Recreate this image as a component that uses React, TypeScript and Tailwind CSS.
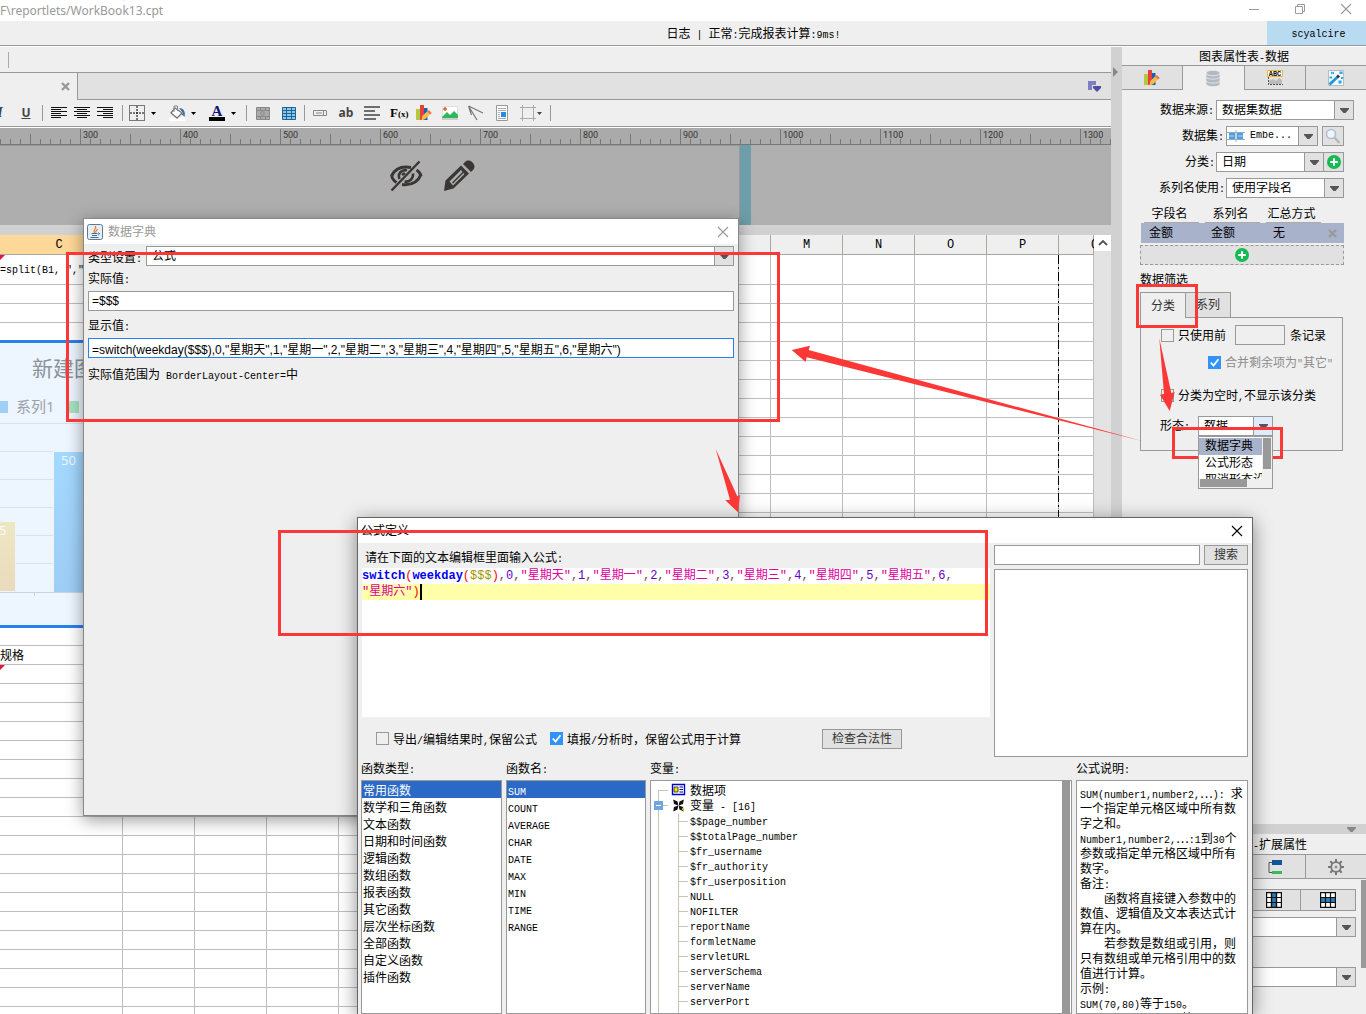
import { Fragment, type ReactNode } from "react"
import clsx from "clsx"

const cjkFont = "font-['Liberation_Sans','Noto_Sans_CJK_SC',sans-serif]"

const rulerMarks = Array.from({ length: 112 }, (_, i) => 220 + i * 10)
const columnNames = ["C", "D", "E", "F", "G", "H", "I", "J", "K", "L", "M", "N", "O", "P", "Q"]
const sheetRows = Array.from({ length: 40 }, (_, i) => i)

const functionTypes = [
  "常用函数",
  "数学和三角函数",
  "文本函数",
  "日期和时间函数",
  "逻辑函数",
  "数组函数",
  "报表函数",
  "其它函数",
  "层次坐标函数",
  "全部函数",
  "自定义函数",
  "插件函数",
]

const functionNames = ["SUM", "COUNT", "AVERAGE", "CHAR", "DATE", "MAX", "MIN", "TIME", "RANGE"]

const variables = [
  "$$page_number",
  "$$totalPage_number",
  "$fr_username",
  "$fr_authority",
  "$fr_userposition",
  "NULL",
  "NOFILTER",
  "reportName",
  "formletName",
  "servletURL",
  "serverSchema",
  "serverName",
  "serverPort",
  "serverURL",
]

const description = [
  "SUM(number1,number2,…): 求",
  "一个指定单元格区域中所有数",
  "字之和。",
  "Number1,number2,…:1到30个",
  "参数或指定单元格区域中所有",
  "数字。",
  "备注:",
  "    函数将直接键入参数中的",
  "数值、逻辑值及文本表达式计",
  "算在内。",
  "    若参数是数组或引用，则",
  "只有数组或单元格引用中的数",
  "值进行计算。",
  "示例:",
  "SUM(70,80)等于150。",
  'SUM("70",80,TRUE)等于',
]

const weekdays = ["星期天", "星期一", "星期二", "星期三", "星期四", "星期五"]

// Latin runs are set in a half-width mono face, Chinese runs in the CJK face.
function Txt({ children, className }: { children: string; className?: string }) {
  const runs = children.match(/[\x20-\x7e]+|[^\x20-\x7e]+/g) ?? []
  return (
    <span className={clsx("font-['Noto_Sans_CJK_SC',sans-serif] text-[12px] whitespace-pre", className)}>
      {runs.map((run, i) =>
        run.charCodeAt(0) < 127 ? (
          <span key={i} className="font-['Liberation_Mono',monospace] text-[10px]">
            {run}
          </span>
        ) : (
          <Fragment key={i}>{run}</Fragment>
        )
      )}
    </span>
  )
}

function Caret() {
  return (
    <svg viewBox="0 0 9 5" className="h-[5px] w-[9px] shrink-0" fill="currentColor">
      <path d="M0 0h9v1L5.500 5h-2L0 1z" />
    </svg>
  )
}

type ComboProps = {
  id: string
  value: string
  label?: string
  className?: string
  hot?: boolean
  icon?: ReactNode
}

function Combo({ id, value, label, className, hot, icon }: ComboProps) {
  return (
    <div className={clsx("relative flex h-5 items-stretch border border-[#999] bg-white", className)}>
      {icon}
      <select
        id={id}
        aria-label={label}
        className="min-w-0 flex-1 appearance-none bg-transparent pl-[5px] pr-5 text-[12px] leading-none text-black outline-none"
      >
        <option>{value}</option>
      </select>
      <span
        className={clsx(
          "pointer-events-none absolute inset-y-0 right-0 flex w-[19px] items-center justify-center border-l border-[#999] text-[#555]",
          hot ? "bg-[#ddebfc]" : "bg-[#e1e1e1]"
        )}
      >
        <Caret />
      </span>
    </div>
  )
}

function Check({ id, text, checked, muted }: { id: string; text: string; checked?: boolean; muted?: boolean }) {
  return (
    <div className="flex items-center gap-1">
      <span className="relative size-[13px] shrink-0">
        <input
          id={id}
          type="checkbox"
          defaultChecked={checked}
          className="peer block size-[13px] appearance-none border border-[#999] checked:border-[#3093f5] checked:bg-[#3093f5]"
        />
        <svg
          viewBox="0 0 13 13"
          className="pointer-events-none absolute inset-0 hidden size-[13px] peer-checked:block"
          fill="none"
          stroke="#fff"
          strokeWidth="1.8"
        >
          <path d="M2.800 6.500l2.700 3L10.500 3.200" />
        </svg>
      </span>
      <label htmlFor={id} className={clsx("h-4 leading-4", muted && "text-[#8c8c8c]")}>
        <Txt>{text}</Txt>
      </label>
    </div>
  )
}

function PlusDot() {
  return (
    <svg viewBox="0 0 14 14" className="size-[14px]">
      <circle cx="7" cy="7" r="7" fill="#13bb50" />
      <path d="M7 3.200v7.600M3.200 7h7.600" stroke="#fff" strokeWidth="2" />
    </svg>
  )
}

function CloseIcon({ className }: { className?: string }) {
  return (
    <svg viewBox="0 0 12 12" className={clsx("size-3", className)} fill="none" stroke="currentColor" strokeWidth="1.1">
      <path d="M1 1l10 10M11 1L1 11" />
    </svg>
  )
}

function SmallCross() {
  return (
    <svg viewBox="0 0 9 9" className="size-[9px]" stroke="#999" strokeWidth="2.400">
      <path d="M1 1l7 7M8 1L1 8" />
    </svg>
  )
}

function ChartIcon() {
  return (
    <svg viewBox="0 0 16 16" className="size-4">
      <path d="M0 4h4v11H0z" fill="#b4ca3c" />
      <path d="M4 0h4v15H4z" fill="#ea3f3d" />
      <path d="M8 3h3.500v12H8z" fill="#1166ac" />
      <path d="M5.500 15.500l.8-4.500 4.700-4.500 3 3-4.700 4.500z" fill="#f6bc4e" />
      <path d="M11 6.500l1.800-1.500 3 3L14 9.500z" fill="#f2744a" />
    </svg>
  )
}

function ToolButton({ label, menu, children }: { label: string; menu?: boolean; children: ReactNode }) {
  return (
    <button type="button" aria-label={label} className="flex shrink-0 items-center gap-[6px]">
      <svg viewBox="0 0 16 16" className="size-4 shrink-0 overflow-visible" fill="none">
        {children}
      </svg>
      {menu && (
        <svg viewBox="0 0 5 3" className="h-[3px] w-[5px]">
          <path d="M0 0h5L2.500 3z" fill="#000" />
        </svg>
      )}
    </button>
  )
}

function AlignLines({ kind }: { kind: "left" | "center" | "right" }) {
  const rows = [16, 10, 16, 10, 16, 10]
  return (
    <>
      {rows.map((w, i) => {
        const x = kind === "left" ? 0 : kind === "center" ? (16 - w) / 2 : 16 - w
        return <rect key={i} x={x} y={2 + i * 2} width={w} height="1" fill="#111" />
      })}
    </>
  )
}

function Toolbar() {
  const group = "flex h-4 items-center border-r border-[#999]"
  return (
    <div className="flex h-[27px] shrink-0 items-center border-b border-[#999] bg-[#efefef]">
      <div className={clsx(group, "w-[43px] justify-end gap-[10px] overflow-hidden pr-2")}>
        <button type="button" className="w-4 shrink-0 font-['Liberation_Serif',serif] text-[14px] leading-4 font-bold text-[#444] italic">
          I
        </button>
        <button type="button" className="w-4 shrink-0 font-['Open_Sans',sans-serif] text-[12px] leading-4 font-bold text-[#444] underline">
          U
        </button>
      </div>
      <div className={clsx(group, "gap-[7px] pr-[9px] pl-2")}>
        <ToolButton label="左对齐"><AlignLines kind="left" /></ToolButton>
        <ToolButton label="居中"><AlignLines kind="center" /></ToolButton>
        <ToolButton label="右对齐"><AlignLines kind="right" /></ToolButton>
      </div>
      <div className={clsx(group, "gap-[13px] pr-[10px] pl-[6px]")}>
        <ToolButton label="边框" menu>
          <path d="M.5.500h15v15H.5z" stroke="#000" strokeDasharray="1 1" />
          <path d="M8 1v14M1 8h14" stroke="#000" strokeDasharray="2 1" />
        </ToolButton>
        <ToolButton label="填充" menu>
          <path d="M0 12.500h16v3.500H0z" fill="#fff" />
          <path d="M6 3l7 5-5 5-6-5z" fill="#fff" stroke="#777" strokeWidth="1.300" />
          <path d="M5 7V1h3.500v5" stroke="#888" />
          <path d="M10 3c4 0 7 3 5.500 9-.5-1-2-2-3-2.500L14 8z" fill="#3a6f9e" />
        </ToolButton>
        <ToolButton label="字体颜色" menu>
          <text x="8" y="11" textAnchor="middle" fontFamily="Liberation Serif" fontWeight="700" fontSize="15" fill="#12127c">
            A
          </text>
          <path d="M0 12h16v4H0z" fill="#000" />
        </ToolButton>
      </div>
      <div className={clsx(group, "gap-[10px] pr-[7px] pl-2")}>
        <ToolButton label="合并单元格">
          <path d="M1.500 2.500h13v12h-13z" fill="#aaa" stroke="#888" />
          <path d="M1 5.500h14M1 11.500h14M5.500 2v3M10.500 2v3M5.500 12v3M10.500 12v3" stroke="#888" />
          <circle cx="7.500" cy="8.500" r="1.800" stroke="#8a8a8a" />
        </ToolButton>
        <ToolButton label="拆分单元格">
          <path d="M1.500 2.500h13v12h-13z" fill="#7dcdf2" stroke="#2d5f8e" />
          <path d="M1 5.500h14M1 8.500h14M1 11.500h14M5.500 2v13M10.500 2v13" stroke="#2d5f8e" />
        </ToolButton>
      </div>
      <div className={clsx(group, "gap-[10px] pr-2 pl-[7px]")}>
        <ToolButton label="控件">
          <path d="M1.500 5.500h13v5h-13zM4 8h6" stroke="#888" />
          <path d="M11.500 6v4" stroke="#888" />
        </ToolButton>
        <button type="button" className="w-4 shrink-0 font-['Open_Sans',sans-serif] text-[12px] leading-4 font-bold text-[#444]">
          ab
        </button>
        <ToolButton label="段落">
          <path d="M0 2h16M0 6h11M0 10h16M0 14h12" stroke="#444" strokeWidth="1.600" />
        </ToolButton>
        <button type="button" className="w-4 shrink-0 font-['Liberation_Serif',serif] text-[13px] leading-4 font-bold text-black">
          F<span className="text-[9px]">(x)</span>
        </button>
        <button type="button" aria-label="图表"><ChartIcon /></button>
        <ToolButton label="图片">
          <path d="M.5 1.500h15v13H.5z" fill="#fff" stroke="#ddd" />
          <path d="M0 12l5-5 3 3 4-4 4 4v3H0z" fill="#2db85a" />
          <path d="M0 13h16v2H0z" fill="#ccc" />
          <path d="M3 2v4M1 4h4" stroke="#f05a28" strokeWidth="1.500" />
        </ToolButton>
        <ToolButton label="斜线">
          <path d="M.5 1L15 8M.5 1L9 15M.5 1l3 9" stroke="#777" strokeWidth="1.200" />
        </ToolButton>
        <ToolButton label="文档">
          <path d="M2.500.500h11v15h-11z" fill="#fff" stroke="#999" />
          <path d="M4 3.500h8M4 5.500h8M4 7.500h2M4 9.500h2M4 11.500h2M4 13.500h8" stroke="#aaa" />
          <path d="M7 7h5v5H7z" fill="#268de0" />
        </ToolButton>
        <button type="button" aria-label="悬浮元素" className="flex items-center gap-px">
          <svg viewBox="0 0 16 16" className="size-4" fill="none" stroke="#aaa">
            <path d="M2.500 0v16M13.500 0v16M0 2.500h16M0 13.500h16" />
          </svg>
          <svg viewBox="0 0 5 3" className="h-[3px] w-[5px]">
            <path d="M0 0h5L2.500 3z" fill="#444" />
          </svg>
        </button>
      </div>
    </div>
  )
}

function Ruler() {
  return (
    <svg className="block h-[18px] w-full shrink-0 border-t border-white bg-[#aaa]">
      <path d="M0 16.500h2000" stroke="#777" />
      {rulerMarks.map((v) => {
        const x = v - 220
        const len = v % 100 === 0 ? 15 : v % 50 === 0 ? 10 : 5
        return <path key={v} d={`M${x + 0.5} ${16 - len}V16`} stroke="#777" />
      })}
      {rulerMarks
        .filter((v) => v % 100 === 0)
        .map((v) => (
          <text key={v} x={v - 217} y="10" fontFamily="Roboto" fontSize="9" fill="#333">
            {v}
          </text>
        ))}
    </svg>
  )
}

function ParameterPane() {
  return (
    <div className="flex h-20 shrink-0 bg-[#b0b0b0]">
      <div className="flex w-[740px] gap-5 border-t border-r border-[#999] bg-[#aeaeae] pt-[14px] pl-[389px] text-[#3b3636]">
        <svg viewBox="0 0 34 32" className="h-8 w-[34px]" fill="none" stroke="currentColor">
          <path d="M2.500 16C6 8.500 13 6 22 7.500M32 14.500C29 22 22 25.500 13 24.500" strokeWidth="3" />
          <path d="M2.500 15c.5 3.500 2 5.500 5 7.500M32 16c-.5-2.500-2-4.500-4.500-6" strokeWidth="2.800" />
          <path d="M10.500 19c-2-5 1-9 7.500-9M13 15l3-2M15.500 21.500c5 1 9-3 8.500-8" strokeWidth="2.600" />
          <path d="M2.500 30.500L30.500 1.500" strokeWidth="2.400" />
        </svg>
        <svg viewBox="0 0 32 32" className="size-8" fill="currentColor">
          <path d="M1 31l1.500-10.500L18 5.500l8 8L10.500 28.500zM6.500 21.500l3.500 4L21.500 14l-1-1L10 23.500l-1-1L19.500 12l-1.500-2z" fillRule="evenodd" />
          <path d="M20 4l2-2c2-2 5-2 7.500.5s2.500 5.500.5 7.500l-2 2z" />
        </svg>
      </div>
      <div className="w-[11px] bg-[#6e9ea9]" />
    </div>
  )
}

function ChartPreview() {
  return (
    <div className="absolute top-[105px] left-0 h-[288px] w-[90px] border-y-[3px] border-[#2b80f0] bg-[#edf5fe]">
      <svg viewBox="0 0 90 282" className="block h-[282px] w-[90px]">
        <defs>
          <linearGradient id="blueBar" x1="0" y1="0" x2="0" y2="1">
            <stop offset="0" stopColor="#a4d9ff" />
            <stop offset="1" stopColor="#9ecdf5" />
          </linearGradient>
          <linearGradient id="sandBar" x1="0" y1="0" x2="0" y2="1">
            <stop offset="0" stopColor="#efe7c4" />
            <stop offset="1" stopColor="#e9dabb" />
          </linearGradient>
        </defs>
        <path d="M0 80.500h90M0 108.500h53M0 136.500h53M0 164.500h53M16 192.500h37M16 220.500h37" stroke="#dae2ea" />
        <path d="M0 249.500h90M34.500 250v3" stroke="#c9d3de" />
        <rect x="54" y="109" width="36" height="140" fill="url(#blueBar)" />
        <rect x="0" y="179" width="15" height="69" fill="url(#sandBar)" />
        <rect x="0" y="58" width="8" height="12" fill="#9fcff6" />
        <rect x="69" y="58" width="10" height="12" fill="#a6e2c1" />
        <g fontFamily="Open Sans, Noto Sans CJK SC">
          <text x="32" y="33" fontSize="21" fill="#8b929a">新建图表</text>
          <text x="16" y="69" fontSize="15" fill="#9aa1a9">系列1</text>
          <text x="61" y="122" fontSize="13" fill="#f0f8ff">50</text>
          <text x="-1" y="192" fontSize="13" fill="#fbfbf5">5</text>
        </g>
      </svg>
    </div>
  )
}

function Sheet() {
  return (
    <div className="flex min-h-0 flex-1">
      <div className="relative min-w-0 flex-1 overflow-hidden bg-white">
        <table className="w-full table-fixed border-separate border-spacing-0">
          <colgroup>
            <col className="w-[123px]" />
            {columnNames.slice(1, -1).map((name) => (
              <col key={name} className="w-[72px]" />
            ))}
            <col />
          </colgroup>
          <thead>
            <tr>
              {columnNames.map((name, i) => (
                <th
                  key={name}
                  className={clsx(
                    "h-5 border-r border-b border-[#a8a89c] p-0 font-['Liberation_Mono',monospace] text-[12px] leading-4 font-normal",
                    i === 0 ? "bg-[#fed898] pr-1" : "bg-[#efefef]",
                    i === columnNames.length - 1 && "pl-8"
                  )}
                >
                  {name}
                </th>
              ))}
            </tr>
          </thead>
          <tbody>
            {sheetRows.map((row) => (
              <tr key={row}>
                {columnNames.map((name, i) => (
                  <td
                    key={name}
                    className={clsx(
                      "overflow-hidden border-r border-b border-[#bebebe] p-0 leading-4",
                      row === 0 ? "h-[30px]" : "h-[19px]"
                    )}
                  >
                    {i === 0 && row === 0 && <Txt>{'=split(B1, ",","'}</Txt>}
                    {i === 0 && row === 20 && <Txt>规格</Txt>}
                  </td>
                ))}
              </tr>
            ))}
          </tbody>
        </table>
        <svg className="pointer-events-none absolute top-5 left-0 h-full w-[1060px]">
          <path d="M0 0h5L0 5zM0 410h5l-5 5z" fill="#e6163b" />
          <path d="M1058.500 0v800" stroke="#000" strokeDasharray="9 3 2 3" />
        </svg>
        <ChartPreview />
      </div>
      <div className="w-[17px] shrink-0 bg-[#e3e3e3]">
        <button type="button" aria-label="向上滚动" className="flex h-4 w-full items-center justify-center bg-white">
          <svg viewBox="0 0 10 6" className="h-[6px] w-[10px]" fill="none" stroke="#555" strokeWidth="1.800">
            <path d="M1 5l4-4 4 4" />
          </svg>
        </button>
      </div>
    </div>
  )
}

function Workspace() {
  return (
    <main className="flex min-w-0 flex-1 flex-col">
      <div className="flex h-[26px] shrink-0 items-center border-b border-[#999] bg-[#efefef] pl-2">
        <span className="h-4 w-px bg-[#aaa]" />
      </div>
      <div className="flex h-[27px] shrink-0 bg-[#e1e1e1]">
        <div className="flex w-[78px] items-center justify-end border-r border-[#999] bg-[#efefef] pr-[7px]">
          <button type="button" aria-label="关闭模板"><SmallCross /></button>
        </div>
        <div className="flex flex-1 items-center justify-end border-b border-[#999] pr-[10px]">
          <button type="button" aria-label="模板列表">
            <svg viewBox="0 0 13 11" className="h-[11px] w-[13px]">
              <path d="M0 0h8v4H4v5H0z" fill="#7c7fc0" />
              <path d="M5 5h8v2l-4 4-4-4z" fill="#4c4fa4" />
            </svg>
          </button>
        </div>
      </div>
      <Toolbar />
      <Ruler />
      <ParameterPane />
      <div className="h-[10px] shrink-0 bg-[#d1d1d1]" />
      <Sheet />
    </main>
  )
}

function PanelTab({ label, selected, children }: { label: string; selected?: boolean; children: ReactNode }) {
  return (
    <button
      type="button"
      aria-label={label}
      className={clsx(
        "flex h-[25px] flex-1 items-center justify-center border-t border-r border-[#999] last:border-r-0",
        selected ? "bg-[#efefef]" : "border-b bg-[#e1e1e1]"
      )}
    >
      {children}
    </button>
  )
}

function FilterBox() {
  return (
    <div className="mr-[23px] ml-[18px]">
      <div className="flex items-end text-[12px] text-[#333]">
        <button type="button" className="h-[26px] w-[45px] border-t border-l border-[#999]">分类</button>
        <button type="button" className="h-[26px] w-[46px] border border-[#999] bg-[#e1e1e1]">系列</button>
        <span className="flex-1 border-b border-[#999]" />
      </div>
      <div className="border-x border-b border-[#999] pt-[7px] pb-[14px]">
        <div className="flex h-5 items-center pl-5">
          <Check id="only-first" text="只使用前" />
          <input aria-label="记录数" className="mr-[5px] ml-[9px] h-5 w-[50px] border border-[#999] bg-[#efefef] px-1 text-[12px]" />
          <Txt>条记录</Txt>
        </div>
        <div className="mt-[7px] flex h-5 items-center pl-[67px]">
          <Check id="merge-rest" text={'合并剩余项为"其它"'} checked muted />
        </div>
        <div className="mt-[13px] flex h-5 items-center pl-5">
          <Check id="hide-empty" text="分类为空时,不显示该分类" />
        </div>
        <div className="mt-[11px] flex h-5 items-center pl-[19px]">
          <label htmlFor="shape" className="w-[38px]"><Txt>形态:</Txt></label>
          <div className="relative w-[75px]">
            <Combo id="shape" value="数据..." hot className="[&>select]:font-['Liberation_Mono','Noto_Sans_CJK_SC',monospace]" />
            <div className="absolute top-5 left-0 z-10 h-[53px] w-full border border-[#999] bg-[#efefef]">
              <ul role="listbox" aria-label="形态" className="h-[42px] w-[63px] overflow-hidden bg-white text-[12px] leading-[17px]">
                <li role="option" aria-selected className="mt-px bg-[#a8b3cb] pl-[6px] whitespace-nowrap">数据字典</li>
                <li role="option" aria-selected={false} className="pl-[6px] whitespace-nowrap">公式形态</li>
                <li role="option" aria-selected={false} className="pl-[6px] whitespace-nowrap">取消形态设置</li>
              </ul>
              <div className="absolute top-px right-px h-[31px] w-2 bg-[#999]" />
              <div className="absolute bottom-px left-px h-2 w-[47px] bg-[#999]" />
            </div>
          </div>
        </div>
      </div>
    </div>
  )
}

function GridGlyph({ vertical }: { vertical?: boolean }) {
  return (
    <svg viewBox="0 0 16 16" className="size-4" fill="#fff" stroke="#111" strokeWidth="1.200">
      <path d="M.6.600h14.800v14.800H.6z" />
      <path d={vertical ? "M5.500.600h5v14.800h-5z" : "M.6 5.500h14.800v5H.6z"} fill="#2f7db4" />
      <path d="M5.500.600v14.800M10.500.600v14.800M.6 5.500h14.800M.6 10.500h14.800" fill="none" />
    </svg>
  )
}

function PropertyPanel() {
  return (
    <aside className="flex w-[244px] shrink-0 flex-col bg-[#efefef]">
      <section className="flex min-h-0 flex-1 flex-col">
        <h2 className="h-[18px] shrink-0 text-center leading-[18px]"><Txt>图表属性表-数据</Txt></h2>
        <div className="flex shrink-0">
          <PanelTab label="类型"><ChartIcon /></PanelTab>
          <PanelTab label="数据" selected>
            <svg viewBox="0 0 16 17" className="h-[17px] w-4" fill="#b1bac2" stroke="#efefef" strokeWidth=".8">
              <path d="M1 11.500v2.500c0 3.500 14 3.500 14 0v-2.500z" />
              <path d="M1 7v3.500c0 3.500 14 3.500 14 0V7z" />
              <path d="M1 3.500v3c0 3.500 14 3.500 14 0v-3z" />
              <ellipse cx="8" cy="3" rx="7" ry="2.700" />
            </svg>
          </PanelTab>
          <PanelTab label="样式">
            <svg viewBox="0 0 16 16" className="size-4">
              <path d="M.5.500h15v6H.5z" fill="#fff" stroke="#f2b632" />
              <text x="8" y="6" textAnchor="middle" fontFamily="Liberation Mono" fontWeight="700" fontSize="7" fill="#111">
                ABC
              </text>
              <path d="M2 14V11l4-2 3 2 3-3 3 2v4z" fill="#bbb" />
              <path d="M1.500 7v7.500H16" stroke="#555" strokeDasharray="2 1" fill="none" />
            </svg>
          </PanelTab>
          <PanelTab label="特效">
            <svg viewBox="0 0 16 16" className="size-4">
              <path d="M.5.500h15v15H.5z" fill="#f5fafd" stroke="#b5bcc2" />
              <path d="M1.500 14.500l7.500-7" stroke="#159be6" strokeWidth="2.800" />
              <path d="M9 7.500L11 5.500" stroke="#333" strokeWidth="2.800" />
              <path d="M3 1.500l1.500 1 1.500-1v3l-1.500-1-1.500 1zM11.500 1.500h3v2.500h-3zM13 7h2v2h-2zM10.500 10.500h3v3h-3zM1.500 6.500h2.500v2H1.500z" fill="#25a7e8" />
            </svg>
          </PanelTab>
        </div>

        <div className="flex flex-col items-end gap-[6px] pt-[10px] pr-[22px]">
          <div className="-mr-[10px] flex h-5 items-center gap-[2px]">
            <label htmlFor="source"><Txt>数据来源:</Txt></label>
            <Combo id="source" value="数据集数据" className="w-[138px]" />
          </div>
          <div className="flex h-5 items-center gap-[2px]">
            <label htmlFor="dataset"><Txt>数据集:</Txt></label>
            <Combo
              id="dataset"
              value="Embe..."
              className="w-[92px] [&>select]:font-['Liberation_Mono',monospace] [&>select]:text-[10px]"
              icon={
                <svg viewBox="0 0 18 12" className="mt-[3px] h-3 w-[18px] shrink-0">
                  <path d="M2 2h6v8H2zM10 2h6v8h-6z" fill="#4aa0e0" />
                  <path d="M0 2.500h18M0 9.500h18M9 0v12" stroke="#9ab" fill="none" />
                  <path d="M2 6h5M11 6h5" stroke="#fff" strokeWidth=".6" />
                </svg>
              }
            />
            <button type="button" aria-label="预览" className="ml-[2px] flex h-5 w-[22px] items-center justify-center border border-[#999] bg-[#e1e1e1]">
              <svg viewBox="0 0 16 16" className="size-4" fill="none">
                <circle cx="6" cy="6" r="4.500" fill="#eef6fc" stroke="#b3bfd0" strokeWidth="1.600" />
                <path d="M9.500 9.500L14.500 15" stroke="#b5b5b8" strokeWidth="2.200" />
              </svg>
            </button>
          </div>
          <div className="flex h-5 items-center">
            <label htmlFor="category"><Txt>分类:</Txt></label>
            <Combo id="category" value="日期" className="ml-px w-[108px]" />
            <button type="button" aria-label="添加分类" className="flex h-5 w-5 items-center justify-center border border-l-0 border-[#999] bg-[#e1e1e1]">
              <PlusDot />
            </button>
          </div>
          <div className="flex h-5 items-center gap-px">
            <label htmlFor="series"><Txt>系列名使用:</Txt></label>
            <Combo id="series" value="使用字段名" className="w-[118px]" />
          </div>
        </div>

        <table className="mt-[7px] mr-[22px] ml-[19px] table-fixed text-left text-[12px] leading-4">
          <thead>
            <tr>
              {["字段名", "系列名", "汇总方式"].map((head) => (
                <th key={head} className="h-[18px] w-[61px] p-0 font-normal whitespace-nowrap">
                  <span className="mx-[3px] block border-b border-[#aaa] pr-1 text-center">{head}</span>
                </th>
              ))}
              <th className="p-0" />
            </tr>
          </thead>
          <tbody>
            <tr className="bg-[#a8b3cb]">
              <td className="h-5 p-0 pl-2">金额</td>
              <td className="p-0 pl-[9px]">金额</td>
              <td className="p-0 pl-[10px]">无</td>
              <td className="p-0">
                <button type="button" aria-label="删除" className="block pl-1"><SmallCross /></button>
              </td>
            </tr>
          </tbody>
        </table>
        <button
          type="button"
          aria-label="添加字段"
          className="mt-[2px] mr-[22px] ml-[18px] flex h-5 shrink-0 items-center justify-center border border-dashed border-[#999] bg-[#e1e1e1]"
        >
          <PlusDot />
        </button>
        <h3 className="mt-[6px] mb-[5px] ml-[18px] h-4 shrink-0 overflow-hidden leading-4"><Txt>数据筛选</Txt></h3>
        <FilterBox />
      </section>

      <section className="h-[190px] shrink-0">
        <div className="flex h-[10px] items-center justify-end bg-[#d1d1d1] pr-[10px] text-[#888]">
          <Caret />
        </div>
        <h2 className="h-5 text-center leading-5"><Txt>单元格属性表-扩展属性</Txt></h2>
        <div className="flex">
          <PanelTab label="单元格" selected>{null}</PanelTab>
          <PanelTab label="条件">{null}</PanelTab>
          <PanelTab label="扩展">
            <svg viewBox="0 0 14 14" className="size-[14px]">
              <path d="M4 0h10v5H4z" fill="#0f5699" />
              <path d="M4 11h10v3H4z" fill="#37b95a" />
              <path d="M4 2.500H1v10h3" fill="none" stroke="#555" />
            </svg>
          </PanelTab>
          <PanelTab label="设置">
            <svg viewBox="0 0 16 16" className="size-4" fill="none" stroke="#777">
              <circle cx="8" cy="8" r="4.800" strokeWidth="1.800" />
              <circle cx="8" cy="8" r="1" />
              <path d="M8 0v3M8 13v3M0 8h3M13 8h3M2.300 2.300l2.200 2.200M11.500 11.500l2.200 2.200M13.700 2.300l-2.200 2.200M4.500 11.500l-2.200 2.200" strokeWidth="2" />
            </svg>
          </PanelTab>
        </div>
        <div className="flex">
          <div className="flex-1 pt-[10px] pr-[5px] pl-5">
            <div className="flex h-[22px] border border-[#999] bg-[#e1e1e1]">
              <button type="button" aria-label="不扩展" className="flex-1 border-r border-[#999]" />
              <button type="button" aria-label="纵向" className="flex w-[54px] items-center justify-center border-r border-[#999]">
                <GridGlyph vertical />
              </button>
              <button type="button" aria-label="横向" className="flex w-[54px] items-center justify-center">
                <GridGlyph />
              </button>
            </div>
            <Combo id="left-parent" value="" label="左父格" className="mt-[6px]" />
            <Combo id="top-parent" value="" label="上父格" className="mt-[30px]" />
          </div>
          <div className="mt-px h-[88px] w-[5px] bg-[#999]" />
        </div>
      </section>
    </aside>
  )
}

function DictionaryDialog() {
  const field =
    "h-5 w-full border bg-white px-[3px] text-[12px] text-black outline-none"
  return (
    <div
      role="dialog"
      aria-label="数据字典"
      className="absolute top-[218px] left-[83px] h-[598px] w-[656px] border border-[#888] bg-[#efefef] shadow-[0_4px_16px_rgba(0,0,0,0.4)]"
    >
      <div className="flex h-[25px] items-center bg-white pr-[9px] pl-[3px] text-[#999]">
        <svg viewBox="0 0 16 16" className="size-4" fill="none">
          <rect x=".5" y=".5" width="15" height="15" rx="2" fill="#e6edf3" stroke="#5a7893" />
          <path d="M8 9C5 6.500 10 5 8.500 2M9 8.500c-1-1.500 1-2 1.500-3.500" stroke="#ee7d21" strokeWidth="1.200" />
          <path d="M4.500 9.500h6M5 11.500h5M3.500 13.500h8M11 9c2-.5 2 1.500 0 2" stroke="#3d6c97" />
        </svg>
        <span className="ml-[5px] flex-1 text-[12px]">数据字典</span>
        <button type="button" aria-label="关闭"><CloseIcon /></button>
      </div>
      <div className="flex flex-col pt-[2px] pr-1 pl-1 leading-4">
        <div className="flex h-5 items-center">
          <label htmlFor="kind" className="w-[58px] pt-1"><Txt>类型设置:</Txt></label>
          <Combo id="kind" value="公式" className="flex-1" />
        </div>
        <label htmlFor="actual" className="mt-1 mb-[5px] h-4"><Txt>实际值:</Txt></label>
        <input id="actual" defaultValue="=$$$" className={clsx(field, "border-[#999]")} />
        <label htmlFor="shown" className="mt-[6px] mb-[5px] h-4"><Txt>显示值:</Txt></label>
        <input
          id="shown"
          defaultValue={'=switch(weekday($$$),0,"星期天",1,"星期一",2,"星期二",3,"星期三",4,"星期四",5,"星期五",6,"星期六")'}
          className={clsx(field, "border-[#2b80f0]")}
        />
        <p className="mt-2 h-4"><Txt>实际值范围为 BorderLayout-Center=中</Txt></p>
      </div>
    </div>
  )
}

function FormulaEditor() {
  return (
    <div
      role="textbox"
      aria-multiline
      aria-label="公式"
      className="h-[149px] overflow-hidden bg-white font-['Liberation_Mono','Noto_Sans_CJK_SC',monospace] text-[12px] leading-4 whitespace-pre text-[#804040]"
    >
      <div className="h-4">
        <b className="text-[#0000f0]">switch</b>
        <span className="text-[#f00]">(</span>
        <b className="text-[#0000f0]">weekday</b>
        <span className="text-[#f00]">(</span>
        <span className="text-[#a09600]">$$$</span>
        <span className="text-[#f00]">)</span>,
        <span className="text-[#6400c8]">0</span>,
        {weekdays.map((day, i) => (
          <Fragment key={day}>
            <span className="text-[#dc009c]">"{day}"</span>,<span className="text-[#6400c8]">{i + 1}</span>,
          </Fragment>
        ))}
      </div>
      <div className="flex h-4 bg-[#ffffaa]">
        <span className="text-[#dc009c]">"星期六"</span>
        <span className="text-[#f00]">)</span>
        <span className="w-[2px] bg-black" />
      </div>
    </div>
  )
}

function TreePane() {
  return (
    <div className="flex min-h-0 flex-1 border border-[#999] bg-white">
      <ul role="tree" aria-label="变量" className="min-w-0 flex-1 overflow-hidden pt-px pl-[3px] leading-4">
        <li role="treeitem" className="flex h-4 items-center">
          <svg viewBox="0 0 36 16" className="h-4 w-9 shrink-0">
            <path d="M4.500 16V8.500H14" stroke="#c9c5b0" fill="none" />
            <path d="M18.500 2.500h12v10h-12z" fill="#fff" stroke="#0000c8" strokeWidth="1.400" />
            <path d="M20 5h4v5h-4z" fill="#f2e000" stroke="#222" strokeWidth=".8" />
            <path d="M25.500 5h3.500M25.500 7.500h3.500M25.500 10H29" stroke="#0000a0" />
          </svg>
          <Txt>数据项</Txt>
        </li>
        <li role="treeitem" aria-expanded className="flex h-4 items-center">
          <svg viewBox="0 0 36 16" className="h-4 w-9 shrink-0">
            <path d="M4.500 0v16M9 7.500h5" stroke="#c9c5b0" />
            <path d="M0 3h9v9H0z" fill="#6ea8e0" />
            <path d="M2 7.500h5" stroke="#fff" />
            <path d="M20 2.500l3 1.500.5 2.500-3-1zM29 2.500L26 4l-.5 2.500 3-1zM20 12.500l3-1.500.5-2.500-3 1zM29 12.500l-3-1.500-.5-2.500 3 1z" stroke="#111" strokeWidth="1.200" fill="#111" />
            <path d="M28 10.500l2 2" stroke="#e0d000" strokeWidth="1.500" />
          </svg>
          <Txt>变量 - [16]</Txt>
        </li>
        {variables.map((name) => (
          <li key={name} role="treeitem" className="flex h-[15px] items-center">
            <svg viewBox="0 0 36 15" className="h-[15px] w-9 shrink-0">
              <path d="M4.500 0v15M24.500 0v15M25 7.500h9" stroke="#c9c5b0" fill="none" />
            </svg>
            <Txt>{name}</Txt>
          </li>
        ))}
      </ul>
      <div className="mr-px w-2 bg-[#999]" />
    </div>
  )
}

function ListPane({ label, items }: { label: string; items: string[] }) {
  return (
    <ul role="listbox" aria-label={label} className="min-h-0 flex-1 overflow-hidden border border-[#999] bg-white leading-[17px]">
      {items.map((item, i) => (
        <li
          key={item}
          role="option"
          aria-selected={i === 0}
          className={clsx("h-[17px] pl-px", i === 0 && "bg-[#2a6ac6] text-white")}
        >
          <Txt>{item}</Txt>
        </li>
      ))}
    </ul>
  )
}

function PaneColumn({ title, className, children }: { title: string; className: string; children: ReactNode }) {
  return (
    <div className={clsx("flex min-h-0 flex-col", className)}>
      <h3 className="mb-1 h-4 shrink-0 leading-4"><Txt>{title}</Txt></h3>
      {children}
    </div>
  )
}

function FormulaDialog() {
  const button = "h-5 border border-[#999] bg-[#e1e1e1] text-[12px] leading-none text-[#333]"
  return (
    <div
      role="dialog"
      aria-label="公式定义"
      className="absolute top-[517px] right-[113px] bottom-0 left-[357px] flex flex-col border border-b-0 border-[#666] bg-[#efefef] shadow-[0_4px_18px_rgba(0,0,0,0.45)]"
    >
      <div className="flex h-[25px] shrink-0 items-center bg-white pr-[9px] pl-[3px] text-black">
        <span className="flex-1 text-[12px]">公式定义</span>
        <button type="button" aria-label="关闭"><CloseIcon /></button>
      </div>
      <div className="flex shrink-0 gap-1 pr-1 pl-1">
        <div className="min-w-0 flex-1">
          <p className="mt-[6px] mb-[3px] h-4 pl-[3px] leading-4"><Txt>请在下面的文本编辑框里面输入公式:</Txt></p>
          <FormulaEditor />
          <div className="flex h-[43px] items-center gap-[13px] pl-[14px]">
            <Check id="keep-export" text="导出/编辑结果时,保留公式" />
            <Check id="keep-calc" text="填报/分析时，保留公式用于计算" checked />
            <button type="button" className={clsx(button, "ml-[68px] w-20")}>检查合法性</button>
          </div>
        </div>
        <div className="w-[254px] pt-[2px]">
          <div className="flex gap-1">
            <input aria-label="搜索函数" className="h-5 min-w-0 flex-1 border border-[#999] bg-white px-1 text-[12px]" />
            <button type="button" className={clsx(button, "w-[44px]")}>搜索</button>
          </div>
          <div className="mt-1 h-[188px] border border-[#999] bg-white" />
        </div>
      </div>
      <div className="flex min-h-0 flex-1 gap-1 pr-1 pl-[3px]">
        <PaneColumn title="函数类型:" className="w-[141px]">
          <ListPane label="函数类型" items={functionTypes} />
        </PaneColumn>
        <PaneColumn title="函数名:" className="w-[140px]">
          <ListPane label="函数名" items={functionNames} />
        </PaneColumn>
        <PaneColumn title="变量:" className="min-w-0 flex-1">
          <TreePane />
        </PaneColumn>
        <PaneColumn title="公式说明:" className="w-[172px]">
          <div className="min-h-0 flex-1 overflow-hidden border border-[#999] bg-white pt-1 pl-[3px]">
            {description.map((line) => (
              <p key={line} className="h-[15px] leading-[15px]"><Txt>{line}</Txt></p>
            ))}
          </div>
        </PaneColumn>
      </div>
    </div>
  )
}

// Red boxes and arrows that walk through the three steps.
function Annotations() {
  return (
    <svg className="pointer-events-none absolute inset-0 size-full">
      <g fill="none" stroke="#fb3836" strokeWidth="3">
        <rect x="67.500" y="253.500" width="711" height="167" />
        <rect x="279.500" y="531.500" width="707" height="103" />
        <rect x="1137.500" y="285.500" width="59" height="41" />
        <rect x="1173.500" y="428.500" width="108" height="29" />
      </g>
      <g fill="#fb3836">
        <path d="M791.700 350l18.300-4.300-1.300 4.300L1143 441.300 806.700 357.300l-1 4.700z" />
        <path d="M715.700 449l21.600 47.300 2.700-1.300-2 17.300-12.700-12 4.700-.6z" />
        <path d="M1159.300 338.300l12 54.700 3.400-1-5 19-9.700-16.300 4-.7z" />
      </g>
    </svg>
  )
}

export default function App() {
  return (
    <div className={clsx("relative flex h-screen w-full flex-col overflow-hidden bg-[#efefef] text-[12px] leading-4 text-black", cjkFont)}>
      <header className="flex h-[21px] shrink-0 items-center justify-between bg-white pr-[14px] text-[#999]">
        <span className="font-['Noto_Sans','Open_Sans',sans-serif] text-[12px] leading-5">F\reportlets/WorkBook13.cpt</span>
        <div className="flex items-center gap-[34px] pb-1">
          <button type="button" aria-label="最小化">
            <svg viewBox="0 0 12 12" className="size-3"><path d="M1 6.500h10" stroke="currentColor" /></svg>
          </button>
          <button type="button" aria-label="还原">
            <svg viewBox="0 0 12 12" className="size-3" fill="none" stroke="currentColor">
              <path d="M1.500 3.500h7v7h-7zM3.500 3V1.500h7v7H9" />
            </svg>
          </button>
          <button type="button" aria-label="关闭"><CloseIcon /></button>
        </div>
      </header>
      <div className="flex h-[26px] shrink-0 border-b border-white">
        <div className="flex flex-1 items-center justify-center border-b border-[#999] pt-[2px] pl-60">
          <Txt>日志 | 正常:完成报表计算:9ms!</Txt>
        </div>
        <button type="button" className="w-[99px] border-b border-[#999] bg-[#b8dbf2] pl-1">
          <Txt>scyalcire</Txt>
        </button>
      </div>
      <div className="flex min-h-0 flex-1">
        <Workspace />
        <div className="w-[11px] shrink-0 bg-[#d1d1d1] pt-5 pl-[2px]">
          <svg viewBox="0 0 5 10" className="h-[10px] w-[5px]"><path d="M0 0l5 5-5 5z" fill="#888" /></svg>
        </div>
        <PropertyPanel />
      </div>
      <DictionaryDialog />
      <FormulaDialog />
      <Annotations />
    </div>
  )
}
